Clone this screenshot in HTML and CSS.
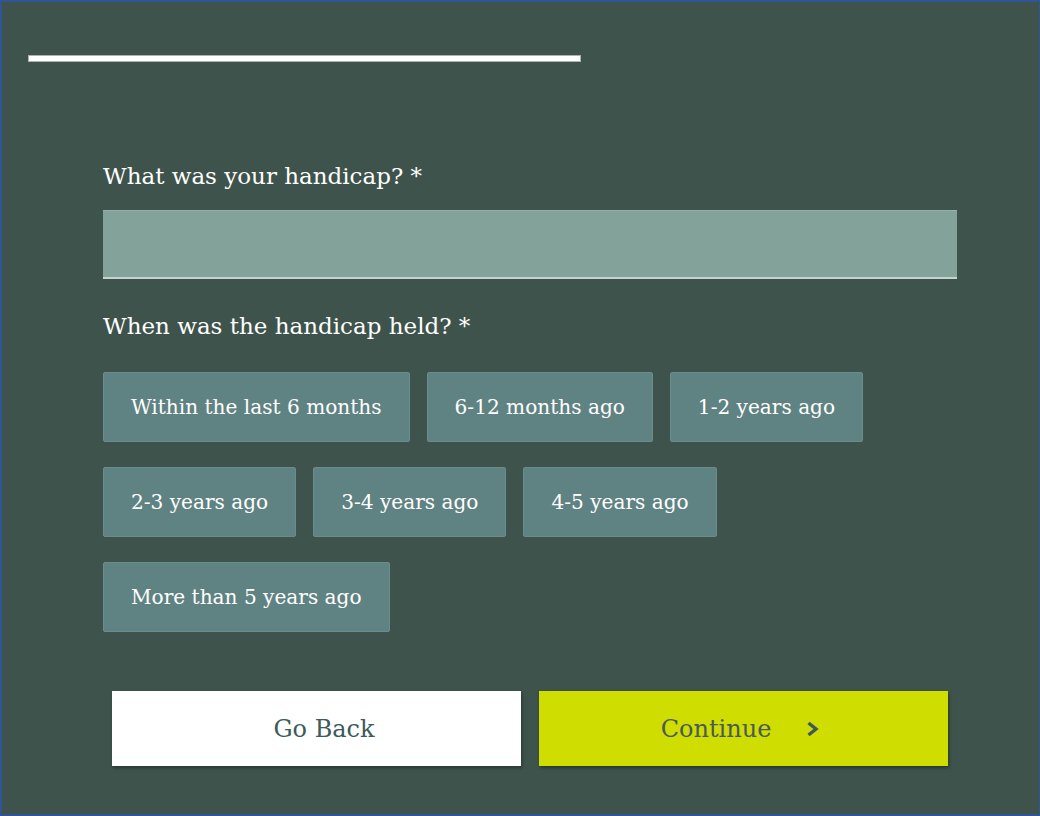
FILE: index.html
```html
<!DOCTYPE html>
<html lang="en">
<head>
<meta charset="utf-8">
<title>Handicap</title>
<link rel="stylesheet" href="styles.css">
</head>
<body>
<div class="frame">
  <div class="progress"></div>
  <form class="form">
    <label class="label" for="hcp">What was your handicap? *</label>
    <input class="field" id="hcp" type="text">
    <div class="label">When was the handicap held? *</div>
    <div class="options">
      <button type="button" class="opt">Within the last 6 months</button>
      <button type="button" class="opt">6-12 months ago</button>
      <button type="button" class="opt">1-2 years ago</button>
      <button type="button" class="opt">2-3 years ago</button>
      <button type="button" class="opt">3-4 years ago</button>
      <button type="button" class="opt">4-5 years ago</button>
      <button type="button" class="opt">More than 5 years ago</button>
    </div>
    <div class="actions">
      <button type="button" class="btn back"><span>Go Back</span></button>
      <button type="button" class="btn next"><span>Continue</span>
        <svg class="chev" width="14" height="16" viewBox="0 0 14 16"><path d="M2.5 2 L10 8 L2.5 14" fill="none" stroke="#3e5a55" stroke-width="3.4"/></svg>
      </button>
    </div>
  </form>
</div>
</body>
</html>
```
FILE: styles.css
```css
* { box-sizing: border-box; }
html, body { margin: 0; padding: 0; }
body {
  width: 1040px;
  height: 816px;
  background: #3e534b;
  font-family: "DejaVu Serif", "Liberation Serif", serif;
  overflow: hidden;
}
.frame {
  width: 1040px;
  height: 816px;
  border: 2px solid #2f5597;
  border-right-width: 1px;
  padding: 53px 0 0 26px;
}
.progress {
  width: 553px;
  height: 7px;
  background: #ffffff;
  border: 1px solid #a9b4b0;
}
.form {
  margin: 99px 0 0 75px;
  width: 854px;
  display: flex;
  flex-direction: column;
}
.label {
  color: #ffffff;
  font-size: 23px;
  line-height: 30px;
  display: block;
}
.field {
  margin-top: 19px;
  height: 69px;
  width: 854px;
  background: #83a39a;
  border: none;
  border-top: 1px solid #97b0a8;
  border-bottom: 2px solid #c5d3ce;
  outline: none;
  margin-bottom: 32px;
}
.options {
  margin-top: 31px;
  display: flex;
  flex-wrap: wrap;
  column-gap: 17px;
  row-gap: 25px;
  width: 800px;
}
.opt {
  height: 70px;
  padding: 0 27px;
  background: #5f8382;
  border: 1px solid #6a8c8a;
  border-radius: 2px;
  color: #ffffff;
  font-family: inherit;
  font-size: 20.1px;
}
.actions {
  margin: 59px 9px 0 9px;
  display: grid;
  grid-template-columns: 1fr 1fr;
  gap: 18px;
}
.btn {
  min-width: 0;
  height: 75px;
  border: none;
  font-family: inherit;
  font-size: 24px;
  box-shadow: 1px 2px 3px rgba(0,0,0,0.35);
  color: #3e5a5a;
  display: flex;
  align-items: center;
  justify-content: center;
}
.back { background: #ffffff; padding-left: 21px; }
.next { background: #d0dd00; color: #4a5a55; padding-right: 12px; }
.chev { flex: none; width: 14px; height: 16px; margin-left: 35px; }
```
